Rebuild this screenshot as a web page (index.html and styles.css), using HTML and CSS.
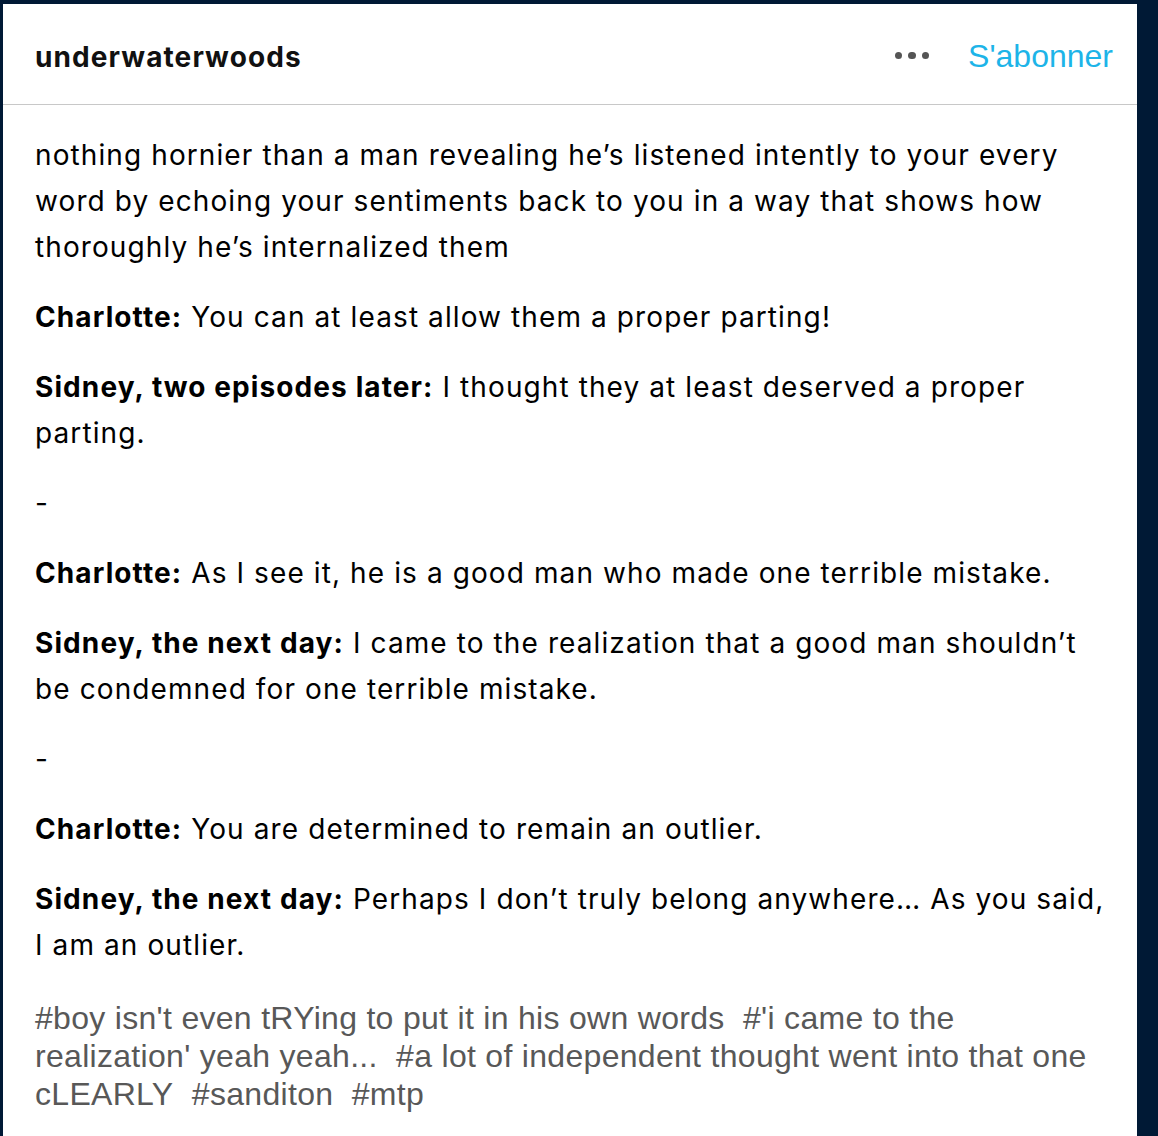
FILE: index.html
```html
<!DOCTYPE html>
<html>
<head>
<meta charset="utf-8">
<link rel="stylesheet" href="styles.css">
</head>
<body>
<div class="page">
  <article class="post">
    <header class="post-header">
      <div class="username">underwaterwoods</div>
      <div class="actions">
        <span class="dots"><i></i><i></i><i></i></span>
        <span class="follow">S'abonner</span>
      </div>
    </header>
    <div class="post-body">
      <p>nothing hornier than a man revealing he’s listened intently to your every word by echoing your sentiments back to you in a way that shows how thoroughly he’s internalized them</p>
      <p><b>Charlotte:</b> You can at least allow them a proper parting!</p>
      <p><b>Sidney, two episodes later:</b> I thought they at least deserved a proper parting.</p>
      <p>-</p>
      <p><b>Charlotte:</b> As I see it, he is a good man who made one terrible mistake.</p>
      <p><b>Sidney, the next day:</b> I came to the realization that a good man shouldn’t be condemned for one terrible mistake.</p>
      <p>-</p>
      <p><b>Charlotte:</b> You are determined to remain an outlier.</p>
      <p><b>Sidney, the next day:</b> Perhaps I don’t truly belong anywhere… As you said, I am an outlier.</p>
      <div class="tags">#boy isn't even tRYing to put it in his own words&nbsp; #'i came to the realization' yeah yeah...&nbsp; #a lot of independent thought went into that one cLEARLY&nbsp; #sanditon&nbsp; #mtp</div>
    </div>
  </article>
</div>
</body>
</html>
```
FILE: styles.css
```css
html, body {
  margin: 0;
  padding: 0;
  background: #001935;
  height: 100%;
  overflow: hidden;
}
.page {
  padding: 4px 21px 0 3px;
}
.post {
  background: #fff;
  min-height: 1200px;
}
.post-header {
  height: 101px;
  border-bottom: 1px solid #c8c8c8;
  display: flex;
  align-items: center;
  justify-content: space-between;
  padding: 5px 24px 0 32px;
  box-sizing: border-box;
}
.username {
  font-family: Inter, sans-serif;
  font-weight: 700;
  font-size: 28px;
  color: #111;
  letter-spacing: 1.1px;
}
.actions {
  display: flex;
  align-items: center;
  gap: 39px;
}
.dots {
  display: flex;
  gap: 6px;
  margin-top: -2px;
}
.dots i {
  width: 7.5px;
  height: 7.5px;
  border-radius: 50%;
  background: #555;
  display: block;
}
.follow {
  font-family: "Liberation Sans", Arial, sans-serif;
  font-size: 32px;
  color: #1db4e8;
}
.post-body {
  padding: 27px 32px 0 32px;
  font-family: Inter, sans-serif;
  font-size: 28px;
  line-height: 46px;
  color: #000;
  letter-spacing: 1.1px;
}
.post-body p {
  margin: 0 0 24px 0;
}
.post-body b {
  font-weight: 700;
  letter-spacing: 1.1px;
}
.tags {
  margin-top: 31px;
  font-family: "Liberation Sans", Arial, sans-serif;
  font-size: 32px;
  line-height: 38px;
  letter-spacing: 0.3px;
  color: #585858;
}
```
